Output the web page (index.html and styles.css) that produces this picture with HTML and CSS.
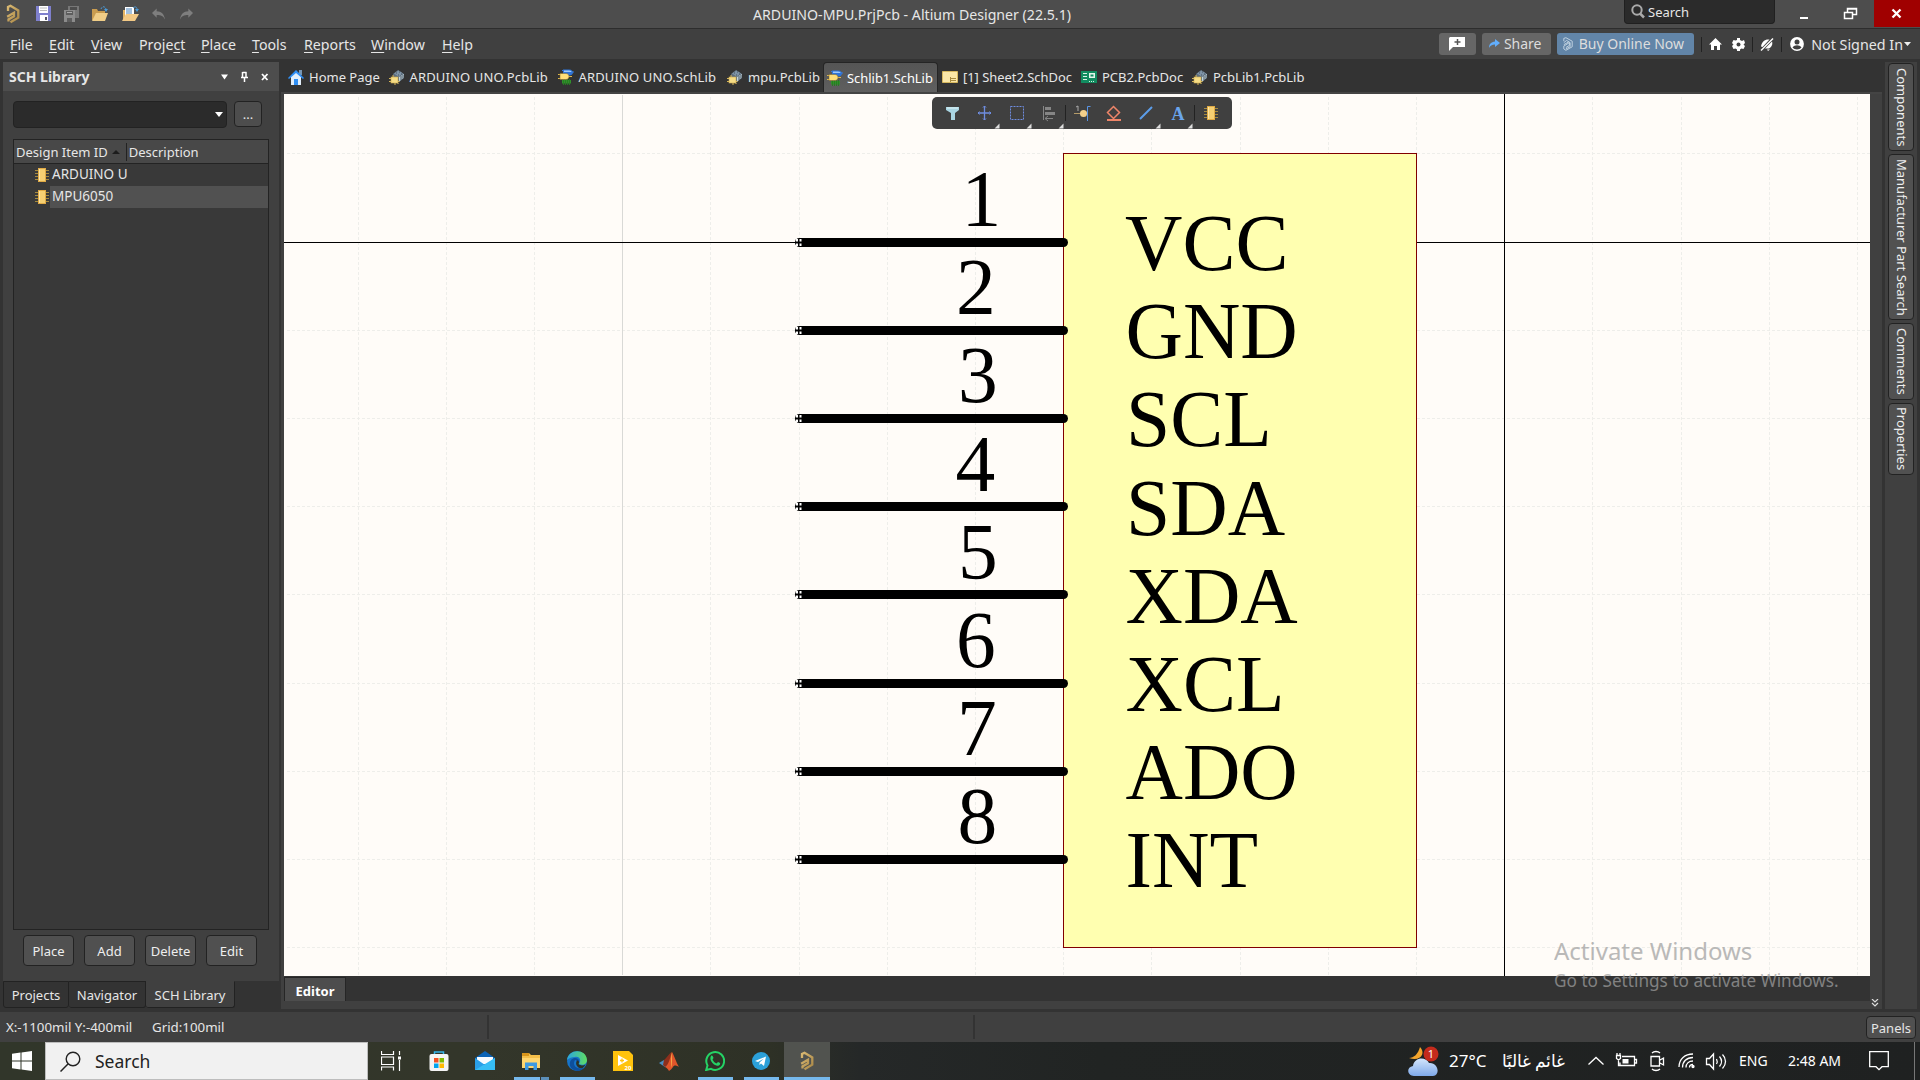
FILE: index.html
```html
<!DOCTYPE html>
<html lang="en">
<head>
<meta charset="utf-8">
<title>Altium Designer</title>
<link rel="stylesheet" href="styles.css">
</head>
<body>
<svg width="0" height="0" class="defs">
  <defs>
    <linearGradient id="gold" x1="0" y1="0" x2="1" y2="1"><stop offset="0" stop-color="#dcbb74"/><stop offset="1" stop-color="#a98746"/></linearGradient>
    <linearGradient id="edgeA" x1="0" y1="0" x2="1" y2="0"><stop offset="0" stop-color="#2aa5e0"/><stop offset="1" stop-color="#5fdd62"/></linearGradient>
    <linearGradient id="cloud" x1="0" y1="0" x2="0" y2="1"><stop offset="0" stop-color="#d4e6fb"/><stop offset="1" stop-color="#7ea9ea"/></linearGradient>
    <symbol id="altium" viewBox="0 0 14 20">
      <path d="M2 7V3L4.500 1.700 12.300 6.500V13.700L4.500 18.300M1.200 12.800L8 8.800V12.300L2.500 15.500V17.500" fill="none" stroke="url(#gold)" stroke-width="2.300"/>
    </symbol>
    <symbol id="pcblib" viewBox="0 0 16 16">
      <path d="M4 5L9 1 15 5V9L10 13 4 10Z" fill="#5d6d7c"/><path d="M5 4.500L9.500 1.500 14 4.500 9.500 7.500Z" fill="#7e93a6"/>
      <path d="M10 8l5-3v3.500l-5 4z" fill="#c3d5dc"/><path d="M12 7v4M14 6v3.500M7 4h1m2-1h1m1 2h1m-4 1h1" stroke="#44525e"/>
      <rect x="2" y="8" width="7" height="6" fill="#f5dc85" stroke="#c9a94f" stroke-width=".6"/>
      <path d="M0 9.500h2M0 12.500h2M9 12.500h1.500M4 6v2M6 14v2M9 14v1" stroke="#d7b658"/>
    </symbol>
    <symbol id="schlib" viewBox="0 0 16 16">
      <path d="M4 1.500h1M14 3h2" stroke="#3a7cd8"/>
      <path d="M5 .5h6c3 0 4 2 4 3s-1 3-4 3H5Z" fill="#2f74d8"/><path d="M6 1.500h5c2 0 2.500 1 2.500 1.500H6z" fill="#9cc8fb"/>
      <path d="M4 11h9v3.500H4z" fill="#30912b"/><path d="M5.500 10v6M7.500 10v6M9.500 10v6M11.500 10v6" stroke="#277d22"/>
      <path d="M0 5.500h2M0 9.500h2M11 7.500h3" stroke="#e0b84a"/>
      <path d="M2 4.500h6c2 0 3 1.500 3 3s-1 3-3 3H2Z" fill="#ffdf78" stroke="#7b6126" stroke-width=".5"/>
    </symbol>
    <symbol id="chip" viewBox="0 0 14 16">
      <path d="M0 3.500h14M0 6.500h14M0 9.500h14M0 12.500h14" stroke="#a68a3e"/>
      <rect x="3.500" y="1.500" width="7" height="13" fill="#f5cf72" stroke="#e0aa45"/><path d="M4.500 2v12" stroke="#fbe5a9"/>
    </symbol>
  </defs>
</svg>

<header class="titlebar">
  <div class="quick">
    <svg class="q-logo" width="14" height="20"><use href="#altium"/></svg>
    <svg width="15" height="15" viewBox="0 0 15 15"><path d="M0 0h15v15H0z" fill="#7f80cd"/><path d="M3 0h9v7H3zM4 9h8v6H4z" fill="#fff"/><path d="M4 2h7M4 4.500h7" stroke="#bbb"/><path d="M9 11h2v3H9z" fill="#556"/></svg>
    <svg width="15" height="16" viewBox="0 0 15 16"><path d="M4 0h11v12H4z" fill="#777"/><path d="M6 1h7v3H6z" fill="#4d4d4d"/><path d="M0 4h11v12H0z" fill="#8b8b8b"/><path d="M2 5h7v4H2zM3 12h5v4H3z" fill="#5d5d5d"/><path d="M3 6.500h5" stroke="#aaa"/></svg>
    <svg width="17" height="16" viewBox="0 0 17 16"><path d="M0 14V3h5l1 2h7v9z" fill="#c99c50"/><path d="M0 15L4 7h12l-3 8z" fill="#f0cd87"/><path d="M9 3c1-3 4-3 5 0" fill="none" stroke="#4b9ad8" stroke-dasharray="2 1"/><path d="M12 3h4l-2 3z" fill="#4b9ad8"/></svg>
    <svg width="17" height="16" viewBox="0 0 17 16"><path d="M1 14V4h5v10z" fill="#e4b464"/><path d="M3 1h9v11H3z" fill="#fff"/><path d="M4 3h6M4 5h6M4 7h6" stroke="#4a84bd"/><path d="M0 15L4 8h13l-4 7z" fill="#f3c985"/><path d="M11 2c2-2 4-1 4 1" fill="none" stroke="#4b9ad8"/><path d="M13 3h4l-2 3z" fill="#4b9ad8"/></svg>
    <svg width="14" height="12" viewBox="0 0 15 12"><path d="M5 0v3c5 0 8 3 9 9-2-4-4-5-9-5v3L0 5z" fill="#7e7e7e"/></svg>
    <svg width="14" height="12" viewBox="0 0 15 12"><path d="M10 0v3C5 3 2 6 1 12c2-4 4-5 9-5v3l5-5z" fill="#7e7e7e"/></svg>
  </div>
  <h1>ARDUINO-MPU.PrjPcb - Altium Designer (22.5.1)</h1>
  <div class="topsearch"><svg width="14" height="15" viewBox="0 0 14 15"><circle cx="6" cy="6" r="4.700" fill="none" stroke="#aaa" stroke-width="2"/><path d="M9 9.500l4 4" stroke="#aaa" stroke-width="2.500"/></svg>Search</div>
  <div class="winbtns">
    <svg width="46" height="27" viewBox="0 0 46 27"><path d="M18 18h8" stroke="#fff" stroke-width="2"/></svg>
    <svg width="46" height="27" viewBox="0 0 46 27"><path d="M16.500 12.500h8v6h-8zM19.500 12V8.500h9v6H25M16 12.500h9M19 9h9" fill="none" stroke="#fff" stroke-width="1.500"/></svg>
    <svg class="close" width="46" height="27" viewBox="0 0 46 27"><path d="M18.500 9.500l8 8M26.500 9.500l-8 8" stroke="#fff" stroke-width="2.300"/></svg>
  </div>
</header>

<nav class="menubar">
  <div class="menus"><span><u>F</u>ile</span><span><u>E</u>dit</span><span><u>V</u>iew</span><span>Proje<u>c</u>t</span><span><u>P</u>lace</span><span><u>T</u>ools</span><span><u>R</u>eports</span><span><u>W</u>indow</span><span><u>H</u>elp</span></div>
  <div class="account">
    <div class="pill note"><svg width="17" height="14" viewBox="0 0 17 14"><path d="M1 0h15v10H4l-4 4V1z" fill="#fff"/><path d="M8.500 2v6M5.500 5h6" stroke="#555" stroke-width="1.500"/></svg></div>
    <div class="pill share"><svg width="11" height="10" viewBox="0 0 11 10"><path d="M6 0l5 4-5 4V5.500C3 5.500 1 7 0 9c0-4 2-6 6-6.500z" fill="#62aefc"/></svg>Share</div>
    <div class="pill buy"><svg width="10" height="14" viewBox="0 0 14 20"><path d="M1 6V2l3-1 9 5v8l-9 5-3-2v-4l8-5v4l-5 3M1 8l4-3 5 3v6l-6 3M1 11l7-4" fill="none" stroke="#c9d8e6" stroke-width="1.300"/></svg>Buy Online Now</div>
    <i></i>
    <svg width="13" height="12" viewBox="0 0 13 12"><path d="M6.500 0L13 6.500H11V12H8V8H5v4H2V6.500H0z" fill="#fff"/></svg>
    <svg class="gear" width="13" height="13" viewBox="0 0 13 13"><path d="M5 0h3v2l2 1 2-1 1 3-1.500 1.500L13 8l-1.500 3-2-.5L8 11.500V13H5v-1.500l-1.500-1-2 .5L0 8l1.500-1.500L0 5l1.500-3L3.500 2.500 5 2z" fill="#fff"/><circle cx="6.500" cy="6.500" r="2" fill="#404040"/></svg>
    <i></i>
    <svg width="14" height="13" viewBox="0 0 14 13"><path d="M1 8.500C2 3 5 1 9.500 1.500L2.500 9zM5 10.500l7-7c1 3-.5 5.500-3 7zM7 11.500h3l-2 1.500z" fill="#fff"/><path d="M1 12.500L13 .5" stroke="#fff" stroke-width="1.400"/></svg>
    <i></i>
    <svg class="user" width="14" height="14" viewBox="0 0 14 14"><circle cx="7" cy="7" r="6.900" fill="#fff"/><circle cx="7" cy="5" r="2.500" fill="#404040"/><path d="M2.500 10.500c2-3 7-3 9 0-2 2.500-7 2.500-9 0z" fill="#404040"/></svg>
    <span class="signin">Not Signed In</span>
    <svg class="dd" width="7" height="4" viewBox="0 0 7 4"><path d="M0 0h7L3.500 4z" fill="#eee"/></svg>
  </div>
</nav>

<main class="workspace">
  <aside class="left">
    <div class="panel">
      <div class="panel-head"><b>SCH Library</b>
        <svg width="52" height="14" viewBox="0 0 52 14"><path d="M2 4.500h7L5.500 9.500z" fill="#fff"/><path d="M23.500 2.500h4M23.500 2v5.500M27 2v5.500M22 7.500h7M25.500 8v4" stroke="#fff" stroke-width="1.500"/><path d="M43 4l5.500 6M48.500 4L43 10" stroke="#fff" stroke-width="1.800"/></svg>
      </div>
      <div class="filter"><div class="combo"><svg width="8" height="5" viewBox="0 0 8 5"><path d="M0 0h8L4 5z" fill="#fff"/></svg></div><div class="more">...</div></div>
      <div class="table">
        <div class="thead"><span>Design Item ID</span><svg width="8" height="4" viewBox="0 0 8 4"><path d="M0 4h8L4 0z" fill="#1c1c1c"/></svg><span class="desc">Description</span></div>
        <div class="row"><svg width="14" height="16"><use href="#chip"/></svg><span>ARDUINO U</span></div>
        <div class="row sel"><svg width="14" height="16"><use href="#chip"/></svg><span>MPU6050</span></div>
      </div>
      <div class="actions"><span>Place</span><span>Add</span><span>Delete</span><span>Edit</span></div>
    </div>
    <div class="ptabs"><span>Projects</span><span>Navigator</span><span class="on">SCH Library</span></div>
  </aside>

  <section class="center">
    <div class="doctabs">
      <div><svg width="16" height="16" viewBox="0 0 16 16"><path d="M11 1h3v5h-3z" fill="#7797b5"/><path d="M3 7l5-5 5 5v9H3z" fill="#e2eefa"/><path d="M0 9L8 1l8 8-1 1-7-6-7 6z" fill="#2f8ff5"/><path d="M6 10h4v6H6z" fill="#2f8ff5"/></svg>Home Page</div>
      <div class="wide"><svg width="16" height="16"><use href="#pcblib"/></svg>ARDUINO UNO.PcbLib</div>
      <div class="wide"><svg width="16" height="16"><use href="#schlib"/></svg>ARDUINO UNO.SchLib</div>
      <div><svg width="16" height="16"><use href="#pcblib"/></svg>mpu.PcbLib</div>
      <div class="active"><svg width="16" height="16"><use href="#schlib"/></svg>Schlib1.SchLib</div>
      <div class="sheet"><svg width="16" height="16" viewBox="0 0 16 16"><path d="M.5 2.500h15v11H.5z" fill="#fbe7a7" stroke="#d7b85f"/><path d="M9 9.500h5M9 11.500h5M8.500 8v5" stroke="#a98c40"/></svg>[1] Sheet2.SchDoc</div>
      <div><svg width="16" height="16" viewBox="0 0 16 16"><path d="M0 2h16v12H0z" fill="#128c60"/><path d="M2 4.500h4M2 7.500h4M2 10.500h4M8 12.500h1m1 0h1m1 0h1" stroke="#d5f3e4"/><path d="M8 4h6v5H8z" fill="#e2f5eb"/><path d="M9.500 5.500h3v2h-3z" fill="#128c60"/></svg>PCB2.PcbDoc</div>
      <div><svg width="16" height="16"><use href="#pcblib"/></svg>PcbLib1.PcbLib</div>
    </div>
    <div class="stage">
      <svg class="canvas" width="1586" height="882" viewBox="284 94 1586 882">
        <defs>
          <g id="pin"><path d="M799.500 0H1063.500" stroke="#000" stroke-width="9" stroke-linecap="round"/><path d="M796 -3.500h2v2.500h-2zM799.500 -3.500h2v2.500h-2zM796 1h2v2.500h-2zM799.500 1h2v2.500h-2z" fill="#fff"/></g>
        </defs>
        <g class="grid">
          <path d="M358.500 97V976M446.500 97V976M534.500 97V976M710.500 97V976M799.500 97V976M887.500 97V976M975.500 97V976M1063.500 97V976M1151.500 97V976M1240.500 97V976M1328.500 97V976M1416.500 97V976M1592.500 97V976M1681.500 97V976M1769.500 97V976M1857.500 97V976"/>
          <path d="M287 153.500H1870M287 330.500H1870M287 418.500H1870M287 506.500H1870M287 594.500H1870M287 683.500H1870M287 771.500H1870M287 859.500H1870M287 947.500H1870"/>
        </g>
        <path d="M622.500 95V975" stroke="#d9d9d6"/>
        <path d="M284 242.500H1870M1504.500 94V976" stroke="#000"/>
        <rect x="1063.500" y="153.500" width="353" height="794" fill="#ffffb0" stroke="#800000"/>
        <use href="#pin" y="242.500"/><use href="#pin" y="330.500"/><use href="#pin" y="418.500"/><use href="#pin" y="506.500"/><use href="#pin" y="594.500"/><use href="#pin" y="683.500"/><use href="#pin" y="771.500"/><use href="#pin" y="859.500"/>
        <g class="sch">
          <text x="961.500" y="225.500">1</text><text x="956" y="313.500">2</text><text x="958" y="401.500">3</text><text x="955.500" y="490.500">4</text><text x="958" y="578.500">5</text><text x="956" y="666.500">6</text><text x="957" y="754.500">7</text><text x="957.500" y="842.500">8</text>
          <text x="1125" y="269.500">VCC</text><text x="1125.500" y="357.500">GND</text><text x="1126" y="445.500">SCL</text><text x="1126" y="534.500">SDA</text><text x="1125.500" y="622.500">XDA</text><text x="1125.500" y="710.500">XCL</text><text x="1125.500" y="798.500">ADO</text><text x="1125.500" y="886.500">INT</text>
        </g>
      </svg>
      <div class="toolbar">
        <svg width="300" height="32" viewBox="932 97 300 32">
          <path d="M946 107h13v3l-4 3v7h-4v-7l-5-3z" fill="#a9d5e2"/><path d="M947 108h11" stroke="#e1f4f8"/>
          <path d="M984.500 106v14M978 113h13" stroke="#6f8de0" stroke-width="1.300"/><path d="M983 107.500l1.500-1.500 1.500 1.500M983 118.500l1.500 1.500 1.500-1.500M979.500 111.500L978 113l1.500 1.500M989.500 111.500l1.500 1.500-1.500 1.500" fill="none" stroke="#6f8de0"/>
          <path d="M1010.500 106.500h13v13h-13z" fill="none" stroke="#6f8de0" stroke-dasharray="2 1"/>
          <path d="M1043.500 106v14" stroke="#858585"/><path d="M1045 107h6v3h-6zM1045 112h10v3h-10z" fill="#858585"/><path d="M1045 118.500h8M1048 116l-3 2.500 3 2.500" fill="none" stroke="#858585"/>
          <path d="M1065.500 105v16M1194.500 105v16" stroke="#222"/>
          <path d="M1074 113.500h8" stroke="#b49b68"/><circle cx="1083.500" cy="113.500" r="3.500" fill="#f2cf8b"/><path d="M1087.500 121v-14.500h3" fill="none" stroke="#5994e5"/><path d="M1076 107l2-1v5" fill="none" stroke="#aaa"/>
          <path d="M1113.500 106.500l6 6-6 6-6-6z" fill="none" stroke="#ee8569" stroke-width="1.500"/><path d="M1107 120h14" stroke="#ee8569" stroke-width="2"/>
          <path d="M1140 119l12-12" stroke="#5c9dea" stroke-width="2"/>
          <text class="letter" x="1178" y="120">A</text>
          <path d="M999.500 123.500v5h-5zM1031.500 123.500v5h-5zM1063.500 123.500v5h-5zM1160.500 123.500v5h-5zM1192.500 123.500v5h-5z" fill="#ddd"/>
          <use href="#chip" x="1204" y="105" width="14" height="16"/>
        </svg>
      </div>
    </div>
    <div class="editorbar"><b>Editor</b><svg width="8" height="8" viewBox="0 0 8 8"><path d="M1 0l3 3 3-3M1 4l3 3 3-3" fill="none" stroke="#ddd" stroke-width="1.200"/></svg></div>
  </section>

  <aside class="right"><span class="t1">Components</span><span class="t2">Manufacturer Part Search</span><span class="t3">Comments</span><span class="t4">Properties</span></aside>
</main>

<footer class="status"><span class="coords">X:-1100mil Y:-400mil</span><span class="gridv">Grid:100mil</span><span class="cell"></span><span class="panels">Panels</span></footer>

<div class="taskbar">
  <div class="start"><svg width="20" height="20" viewBox="0 0 20 20"><path d="M0 2.800l8.500-1.200v8H0zM9.500 1.500L20 0v9.600H9.500zM0 10.500h8.500v8L0 17.300zM9.500 10.500H20V20L9.500 18.500z" fill="#fff"/></svg></div>
  <div class="find"><svg width="21" height="21" viewBox="0 0 21 21"><circle cx="13" cy="8" r="6.800" fill="none" stroke="#222" stroke-width="1.400"/><path d="M8.200 12.800L.5 20.500" stroke="#222" stroke-width="1.500"/></svg>Search</div>
  <div class="apps">
    <div class="view"><svg width="20" height="20" viewBox="0 0 20 20"><path d="M.5 0v3.500h12V0M.5 19.500V16h12v3.500M.5 6h12v7.500H.5zM18.500 0v4M18.500 9v11" fill="none" stroke="#fff" stroke-width="1.200"/><path d="M17 5.500h3v3h-3z" fill="#fff"/></svg></div>
    <div><svg width="20" height="20" viewBox="0 0 20 20"><path d="M5.500 4V1h9v3" fill="none" stroke="#35b5ea" stroke-width="1.500"/><rect y="3" x=".5" width="19" height="17" rx="2" fill="#f4f4f4"/><path d="M5 7h4.500v4.500H5z" fill="#f25022"/><path d="M10.500 7H15v4.500h-4.500z" fill="#7fba00"/><path d="M5 12.500h4.500V17H5z" fill="#00a4ef"/><path d="M10.500 12.500H15V17h-4.500z" fill="#ffb900"/></svg></div>
    <div><svg width="20" height="20" viewBox="0 0 20 20"><path d="M0 7l10-7 10 7v12H0z" fill="#0b63b6"/><path d="M2 6h16v7H2z" fill="#f7fbff"/><path d="M0 7l10 7L20 7v12H0z" fill="#2a9fe8"/><path d="M0 19l20-12v12z" fill="#36bdf5"/></svg></div>
    <div class="run stack"><svg width="18" height="17" viewBox="0 0 18 17"><path d="M0 0h7l2 2h9v13H0z" fill="#f5c04a"/><path d="M0 0h7v3H0z" fill="#d9961c"/><path d="M0 5h18v10H0z" fill="#ffd670"/><path d="M3 17V9.500h12V17h-3.500v-4h-5v4z" fill="#3f9ae2"/></svg></div>
    <div class="run"><svg width="20" height="20" viewBox="0 0 20 20"><circle cx="10" cy="10" r="10" fill="#1674c9"/><path d="M0 9C1-2 19-3 20 9c0 4-4 6-8 4 3-4 0-8-4-7-3 0-6 1-8 3z" fill="url(#edgeA)"/><path d="M8 9c-3 5 1 10 9 8-5 5-12 3-14-2-1-5 2-8 5-8 4 0 5 3 3 6 0-3-2-4-3-4z" fill="#0d4f9c"/><path d="M10 9.500c2 0 2.500 2 1.500 3.500 2 2 5 1.500 7 .5-1 2-2 3-3 3.500-5 1-8-4-5.500-7.500z" fill="#2c3226"/></svg></div>
    <div><svg width="20" height="20" viewBox="0 0 20 20"><path d="M0 0h16l4 4v16H0z" fill="#ffc30e"/><path d="M5 4l10 5.500L5 15z" fill="#fff"/><path d="M7 9.500h4M9 7.500v4" stroke="#ffc30e" stroke-width="1.300"/><text class="tiny" x="11.500" y="19">20</text></svg></div>
    <div><svg width="20" height="19" viewBox="0 0 20 19"><path d="M0 11l5-3 4 4-3 3z" fill="#4b8dc0"/><path d="M5 8c3-2 5-7 8-8l-3 12-4 3-2-2z" fill="#8c2f1c"/><path d="M13 0c2 3 4 10 7 15-3-2-5-2-6 0-1 2-3 3-4 4-1-2-2-3-4-4 4-2 5-10 7-15z" fill="#e0562b"/><path d="M13 0c0 6 0 12-1 16 0-5 0-11 1-16z" fill="#ffc04d"/></svg></div>
    <div class="run"><svg width="20" height="20" viewBox="0 0 20 20"><path d="M1.200 19l1.300-4.600A8.900 8.900 0 1 1 6 17.800z" fill="none" stroke="#25d366" stroke-width="2"/><path d="M6 5c1-1 2 0 2.500 2L7.500 8.500c1 2 2 3 4 4L13 11c2 .5 2.500 1 2 2.500-2 2.500-5 1-7-1S4.500 7.500 6 5z" fill="#25d366"/></svg></div>
    <div class="run"><svg width="18" height="18" viewBox="0 0 18 18"><circle cx="9" cy="9" r="9" fill="#2ba0d9"/><path d="M3 9l11-4.500L12 14l-3-2.500L7.500 13V10.500L12 6.500 6 10z" fill="#fff"/></svg></div>
    <div class="run cur"><svg width="14" height="20"><use href="#altium"/></svg></div>
  </div>
  <div class="tray">
    <svg class="weather" width="32" height="30" viewBox="0 0 32 30"><path d="M12 1c6 6 1 15-11 11 5 0 9-4 11-11z" fill="#f4a52c"/><path d="M6 30c-7 0-8-9-1-10 1-9 13-10 16-3 9-1 12 12 4 13z" fill="url(#cloud)"/><circle cx="23" cy="8" r="7.500" fill="#c42b1c"/><text class="badge" x="23" y="12">1</text></svg>
    <span class="temp">27°C</span><span class="ar" dir="rtl" lang="ar">غائم غالبًا</span>
    <svg class="icons" width="140" height="22" viewBox="1587 1051 140 22" fill="none" stroke="#fff" stroke-width="1.300">
      <path d="M1588.500 1065.500l7.500-7 7.500 7"/>
      <path d="M1622 1057.500h12.500v9H1620v-3M1635 1060.500h1.500v3.500h-1.500M1617 1054v2M1620 1054v2M1616.500 1056.500h4v3l-2 1.500-2-1.500zM1618.500 1061v5.500h2"/><path d="M1622.500 1060h6v4.500h-6z" fill="#fff" stroke="none"/>
      <path d="M1651 1057.500h8.500v9.500h-8.500zM1660 1061l3.500-2v7l-3.500-2M1652 1054c2-2 6-2 8 0M1652 1070c2 2 6 2 8 0"/>
      <path d="M1679 1068c0-8 6-13 14-13M1682.500 1068.500c0-6 4-10 10.500-10M1686 1068.500c0-4 3-6.500 7-6.500M1689.500 1068.500c0-2 1-3 3.500-3"/><circle cx="1693" cy="1067.500" r="1" fill="#fff"/>
      <path d="M1706.500 1059.500h3l4-4.500v15l-4-4.500h-3zM1716.500 1060c1 2 1 3.500 0 5M1719.500 1057.500c2.500 3 2.500 7 0 10M1722.500 1055.500c4 4 4 10 0 14"/>
    </svg>
    <span class="lang">ENG</span><span class="clock">2:48 AM</span>
    <svg class="notif" width="20" height="20" viewBox="0 0 20 20"><path d="M.7.7h18.600v15H13l-3 3-3-3H.7z" fill="none" stroke="#fff" stroke-width="1.300"/></svg>
    <i class="peek"></i>
  </div>
</div>

<div class="activate"><p>Activate Windows</p><p class="small">Go to Settings to activate Windows.</p></div>
</body>
</html>
```
FILE: styles.css
```css
*{box-sizing:border-box}
body{margin:0;width:1920px;height:1080px;overflow:hidden;background:#333;color:#e6e6e6;font:13px/18px "Noto Sans","Open Sans",sans-serif;display:flex;flex-direction:column;white-space:nowrap}
svg{display:block;flex:none}
.defs{position:absolute}

.titlebar{height:29px;background:#4d4d4d;border-bottom:1px solid #2d2d2d;display:flex}
.quick{display:flex;align-items:center;padding-left:6px;gap:13px;height:27px;width:624px}
.quick .q-logo{margin-right:3px}
.titlebar h1{margin:0;padding-left:129px;width:664px;font-size:14.150px;font-weight:400;line-height:29px}
.topsearch{width:151px;height:24px;margin-left:336px;background:#2b2b2b;border:1px solid #202020;border-top:0;border-radius:0 0 4px 4px;display:flex;align-items:center;gap:3px;padding-left:6px}
.winbtns{display:flex;margin-left:7px}
.close{background:#a00000}

.menubar{height:30px;background:#404040;display:flex;justify-content:space-between;font-size:14px;line-height:31px}
.menus{display:grid;grid-template-columns:39px 42px 48px 62px 51px 52px 67px 71px 40px;padding-left:10px;font-size:14.200px}
.menus u{text-underline-offset:2px}
.account{display:flex;align-items:center;padding-right:9px;width:481px;font-size:14.300px}
.pill{height:22px;border-radius:3px;background:#666;display:flex;align-items:center;line-height:22px;color:#ddd}
.note{width:37px;padding-left:10px}
.share{width:69px;margin:0 6px;padding-left:7px;gap:4px;font-size:14px}
.buy{width:138px;background:#6285a8;padding-left:6px;gap:6px;font-size:14px}
.account i{width:1px;height:15px;background:#222;margin:0 7px}
.gear{margin-left:10px}
.user{margin-left:1px}
.signin{margin-left:7px;width:92px}
.dd{margin-left:1px}

.workspace{height:950px;padding-top:3px;display:flex;background:#333}
.left{width:281px;padding-left:3px;display:flex;flex-direction:column}
.panel{width:276px;height:919px;background:#404040;padding-right:10px}
.panel-head{height:29px;width:276px;background:#4d4d4d;display:flex;align-items:center;justify-content:space-between;padding:0 8px 0 6px;font-size:14px}
.filter{display:flex;gap:7px;padding:10px 0 0 10px}
.combo{width:214px;height:27px;background:#2b2b2b;border:1px solid #222;border-radius:4px;display:flex;align-items:center;justify-content:flex-end;padding-right:3px}
.more{width:28px;height:26px;background:#4d4d4d;border:1px solid #222;border-radius:4px;text-align:center;line-height:25px}
.table{margin:11px 0 0 10px;width:256px;height:791px;border:1px solid #232323;background:#393939}
.thead{height:24px;background:#484848;border-bottom:1px solid #232323;display:flex;align-items:center;padding-left:2px}
.thead svg{margin:0 6px 0 4px}
.thead .desc{border-left:1px solid #222;padding-left:2px}
.row{height:22px;display:flex;align-items:center;padding-left:21px;gap:1px;font-size:13.500px}
.row span{flex:1;height:22px;line-height:21px;padding-left:2px}
.row.sel span{background:#515151}
.actions{display:flex;gap:10px;padding:5px 0 0 20px}
.actions span{width:51px;height:31px;border:1px solid #222;border-radius:4px;background:#505050;text-align:center;line-height:30px;color:#eee}
.ptabs{display:flex;height:27px}
.ptabs span{border:1px solid #222;border-left:0;width:77px;text-align:center;line-height:26px;border-radius:0 0 3px 3px}
.ptabs span:first-child{width:66px;border-left:1px solid #222}
.ptabs .on{width:89px;background:#404040;border-top-color:#404040}

.center{width:1604px;background:#404040;border-right:3px solid #333;display:flex;flex-direction:column}
.doctabs{height:32px;background:#333;border-bottom:2px solid #444;padding-left:7px;display:grid;grid-template-columns:101px 169px 169px 96px 115px 143px 111px 120px}
.doctabs div{display:flex;align-items:center;gap:5px;line-height:30px;height:30px}
.doctabs .wide{gap:4.500px;letter-spacing:.13px}
.doctabs .active{background:linear-gradient(#555,#5f5f5f);border:1px solid #252525;border-bottom:0;border-radius:4px 4px 0 0;padding-left:3px;gap:4px;color:#fff;width:115px;font-size:12.900px}
.doctabs .sheet{padding-left:4px;font-size:12.900px}
.stage{position:relative;height:882px;margin-left:3px;width:1586px;background:#fffcf8}
.grid path{stroke:#eeeeea;stroke-dasharray:3 2;fill:none}
.sch{font:79.500px "Liberation Serif",serif;fill:#000}
.toolbar{position:absolute;left:648px;top:3px;width:300px;height:32px;background:#404040;border-radius:5px}
.letter{font:bold 18px "Liberation Serif",serif;fill:#6aa5ec;text-anchor:middle}
.editorbar{margin-left:3px;width:1586px;height:25px;background:#333;padding-top:1px;display:flex;justify-content:space-between}
.editorbar b{width:62px;height:24px;background:#4d4d4d;border:1px solid #262626;border-bottom:0;text-align:center;color:#fff;line-height:26px}
.editorbar svg{margin:22px -9px 0 0}

.right{width:32px;background:#404040;padding:1px 0 0 3px;display:flex;flex-direction:column;gap:3px}
.right span{writing-mode:vertical-rl;width:26px;border:1px solid #222;border-radius:4px;background:#515151;line-height:22px;text-align:center;font-size:13px;color:#eee}
.t1{height:88px}.t2{height:166px}.t3{height:77px}.t4{height:72px}

.status{height:33px;border-top:3px solid #333;background:#404040;display:flex;align-items:center;padding-left:6px;font-size:13.300px}
.coords{width:146px}.gridv{width:335px}
.cell{width:488px;height:24px;border:solid #333;border-width:0 2px}
.panels{margin-left:auto;margin-right:4px;width:50px;height:23px;border:1px solid #222;border-radius:4px;background:#505050;text-align:center;line-height:22px;font-size:13px}

.taskbar{height:38px;display:flex;background:linear-gradient(90deg,#31362a 0,#33362a 480px,#2e3126 770px,#252828 860px,#212423 1100px,#1f2121 1920px);font-size:14px}
.start{width:45px;display:flex;align-items:center;padding-left:12px}
.find{width:323px;background:#f1f1f1;border:1px solid #bdbdbd;display:flex;align-items:center;gap:14px;padding-left:14px;color:#222;font-size:17.500px}
.apps{display:grid;grid-template-columns:repeat(10,46px);margin-left:2px;width:462px}
.apps div{height:38px;display:flex;align-items:center;justify-content:center}
.apps .view{padding-right:4px}
.run{background:linear-gradient(#76b9ed,#76b9ed) center bottom/35px 3px no-repeat}
.stack{background-image:linear-gradient(90deg,#76b9ed 26px,#333 26px,#333 27px,#5b8fb9 27px)}
.cur{background-color:#51534f;background-size:46px 3px}
.tiny{font:bold 6px "Noto Sans",sans-serif;fill:#fff}
.badge{font:11px "Noto Sans",sans-serif;fill:#fff;text-anchor:middle}
.tray{margin-left:auto;width:512px;display:flex;align-items:center;color:#fff}
.temp{width:48px;margin-left:9px;font-size:17px}
.ar{width:68px;font-size:17px;text-align:right}
.icons{margin-left:22px}
.lang{margin-left:12px;width:49px}
.clock{width:81px}
.peek{width:1px;height:38px;background:#777;margin-left:25px}

.activate{position:absolute;left:1554px;top:934px;color:#a0a0a0;opacity:.72}
.activate p{margin:0;font-size:24px;line-height:34px}
.activate .small{font-size:17.200px;line-height:26px}
```
